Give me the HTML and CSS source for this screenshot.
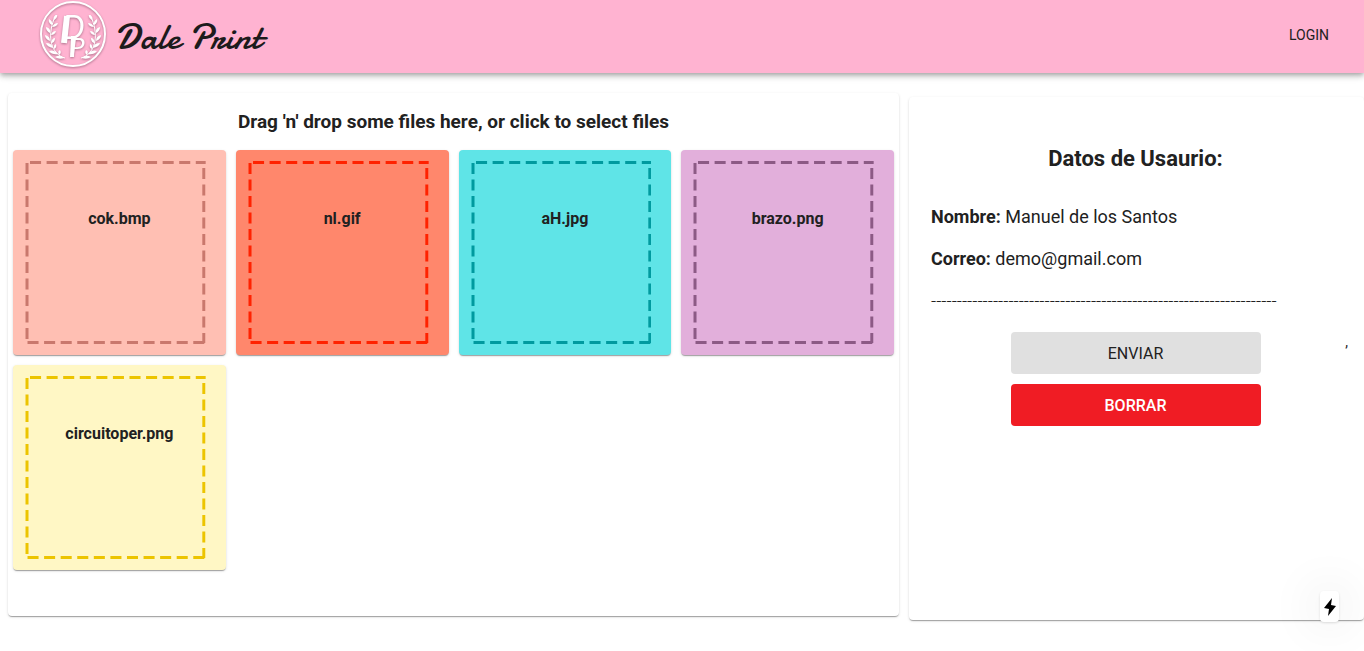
FILE: index.html
```html
<!DOCTYPE html>
<html lang="es">
<head>
<meta charset="utf-8">
<title>Dale Print</title>
<link rel="stylesheet" href="styles.css">
</head>
<body>
<svg width="0" height="0" class="symbols" aria-hidden="true">
  <symbol id="frame" viewBox="0 0 180 184" preserveAspectRatio="none">
    <g fill="none" stroke="currentColor" stroke-width="3" stroke-dasharray="11 5.5">
      <path d="M5 2.500H180"/>
      <path d="M178 8V183"/>
      <path d="M2.500 182.500H180"/>
      <path d="M2 3V181"/>
    </g>
  </symbol>
  <symbol id="branch" viewBox="0 0 22 44">
    <path d="M21 43C7 39 3 22 10 4" fill="none" stroke="#fff" stroke-width="1"/>
    <g fill="#fff">
      <path d="M10 5Q8 2 13-1Q14 3 10 5Z"/>
      <path d="M8 10Q4 8 5 4Q9 6 8 10Z"/><path d="M8 12Q10 8 14 8Q13 12 8 12Z"/>
      <path d="M6 18Q2 16 2 12Q7 13 6 18Z"/><path d="M7 20Q8 16 12 16Q11 20 7 20Z"/>
      <path d="M6 26Q1 24 1 20Q6 21 6 26Z"/><path d="M7 28Q8 23 11 23Q11 28 7 28Z"/>
      <path d="M9 33Q3 32 2 28Q8 28 9 33Z"/><path d="M10 34Q9 30 12 29Q13 33 10 34Z"/>
      <path d="M14 39Q8 40 5 36Q10 34 14 39Z"/><path d="M15 40Q13 36 16 35Q18 38 15 40Z"/>
      <path d="M20 43Q15 45 11 42Q16 39 20 43Z"/>
    </g>
  </symbol>
</svg>

<header class="appbar">
  <a class="brand" href="#">
    <svg class="logo" viewBox="0 0 68 68" aria-hidden="true">
      <circle cx="34" cy="34" r="32" fill="none" stroke="#fff" stroke-width="2"/>
      <use href="#branch" x="5" y="15" width="22" height="44"/>
      <use href="#branch" x="5" y="15" width="22" height="44" transform="matrix(-1 0 0 1 68 0)"/>
      <path d="M28 16 25 43" fill="none" stroke="#fff" stroke-width="6"/>
      <path d="M34 36 33 57" fill="none" stroke="#fff" stroke-width="4"/>
      <text class="mono" x="23" y="39"><tspan class="mono-d">D</tspan><tspan class="mono-p" x="31" y="56">P</tspan></text>
    </svg>
    <span class="wordmark">Dale Print</span>
  </a>
  <button class="login" type="button">LOGIN</button>
</header>

<main class="page">
  <section class="panel files">
    <h1 class="drop-title">Drag 'n' drop some files here, or click to select files</h1>
    <div class="grid">
      <article class="card salmon"><svg class="frame"><use href="#frame"/></svg><h2 class="name">cok.bmp</h2></article>
      <article class="card coral"><svg class="frame"><use href="#frame"/></svg><h2 class="name">nl.gif</h2></article>
      <article class="card aqua"><svg class="frame"><use href="#frame"/></svg><h2 class="name">aH.jpg</h2></article>
      <article class="card plum"><svg class="frame"><use href="#frame"/></svg><h2 class="name">brazo.png</h2></article>
      <article class="card lemon"><svg class="frame"><use href="#frame"/></svg><h2 class="name">circuitoper.png</h2></article>
    </div>
  </section>

  <section class="panel user">
    <h2 class="user-title">Datos de Usaurio:</h2>
    <p class="field"><b>Nombre:</b> Manuel de los Santos</p>
    <p class="field"><b>Correo:</b> demo@gmail.com</p>
    <p class="field rule">-------------------------------------------------------------------</p>
    <div class="actions">
      <button class="btn send" type="button">ENVIAR</button>
      <button class="btn clear" type="button">BORRAR</button>
      <span class="comma">,</span>
    </div>
  </section>
</main>

<button class="bolt" type="button" aria-label="Acciones">
  <svg viewBox="0 0 12 18" width="12" height="18" aria-hidden="true"><path d="M8 0 0 10 5 11 4 18 12 8 7 7Z"/></svg>
</button>
</body>
</html>
```
FILE: styles.css
```css
* { box-sizing: border-box; }
body {
  margin: 0;
  background: #fff;
  color: #212121;
  font-family: Roboto, "Liberation Sans", sans-serif;
  overflow-x: hidden;
}
h1, h2, p { margin: 0; }
button { font-family: inherit; border: 0; cursor: pointer; }
.symbols { position: absolute; }

.appbar {
  display: flex;
  justify-content: space-between;
  align-items: center;
  height: 73px;
  padding: 0 27px 4px 39px;
  background: #ffb3d1;
  box-shadow: 0 2px 4px -1px rgba(0,0,0,.2), 0 4px 5px rgba(0,0,0,.14), 0 1px 10px rgba(0,0,0,.12);
}
.brand {
  display: flex;
  align-items: center;
  gap: 8px;
  padding-bottom: 2px;
  color: #1d1b1c;
  text-decoration: none;
}
.logo { width: 68px; height: 68px; filter: drop-shadow(0 1px 1px rgba(90,50,70,.5)); }
.mono { fill: #fff; font-family: Lato, sans-serif; font-style: italic; }
.mono-d { font-size: 32px; font-weight: 400; }
.mono-p { font-size: 26px; font-weight: 400; }
.wordmark {
  padding-top: 6px;
  font-family: Damion, Yesteryear, cursive;
  font-size: 37px;
  line-height: 44px;
}
.login {
  padding: 8px;
  background: none;
  color: #212121;
  font-size: 14px;
  line-height: 20px;
}

.page {
  display: grid;
  grid-template-columns: 891fr 455fr;
  gap: 10px;
  padding: 20px 0 24px 8px;
}
.panel {
  min-height: 523px;
  border-radius: 4px;
  background: #fff;
  box-shadow: 0 2px 1px -1px rgba(0,0,0,.2), 0 1px 1px rgba(0,0,0,.14), 0 1px 3px rgba(0,0,0,.12);
}
.files { padding: 13px 5px 45px; margin-bottom: 4px; }
.drop-title {
  margin-bottom: 12px;
  font-size: 19px;
  font-weight: 700;
  line-height: 32px;
  text-align: center;
}
.grid {
  display: grid;
  grid-template-columns: repeat(4, 1fr);
  gap: 10px;
}
.card {
  display: grid;
  height: 205px;
  border-radius: 4px;
  box-shadow: 0 2px 1px -1px rgba(0,0,0,.2), 0 1px 1px rgba(0,0,0,.14), 0 1px 3px rgba(0,0,0,.12);
}
.frame, .name { grid-area: 1 / 1; }
.frame { width: 85%; height: 184px; margin: 10px 0 0 12px; }
.name {
  padding-top: 57px;
  color: #212121;
  font-size: 16px;
  font-weight: 700;
  line-height: 24px;
  text-align: center;
}
.salmon { background: #ffbfb3; color: #c9786d; }
.coral { background: #ff876c; color: #ff2200; }
.aqua { background: #5fe4e7; color: #009a9f; }
.plum { background: #e2afdb; color: #8c5a85; }
.lemon { background: #fff7c5; color: #ecc400; }

.user { margin-top: 4px; padding: 46px 16px 0 14px; }
.user-title {
  margin-bottom: 26px;
  font-size: 22px;
  font-weight: 700;
  line-height: 32px;
  text-align: center;
}
.field {
  margin-bottom: 10px;
  padding-left: 8px;
  font-size: 18px;
  line-height: 32px;
}
.rule { font-weight: 300; }
.actions {
  display: grid;
  grid-template-columns: 1fr 250px 1fr;
  gap: 10px 0;
  padding-top: 5px;
}
.btn {
  grid-column: 2;
  height: 42px;
  border-radius: 4px;
  font-size: 16px;
}
.send { background: #e0e0e0; color: #212121; }
.clear { background: #f01c24; color: #fff; font-weight: 500; }
.comma { grid-area: 1 / 3; justify-self: end; font-size: 14px; line-height: 20px; }

.bolt {
  position: fixed;
  right: 25px;
  bottom: 29px;
  display: grid;
  place-items: center;
  width: 19px;
  height: 31px;
  padding: 0;
  border-radius: 4px;
  background: #fff;
  box-shadow: 0 1px 3px rgba(0,0,0,.12), 0 0 50px rgba(0,0,0,.16);
}
```
